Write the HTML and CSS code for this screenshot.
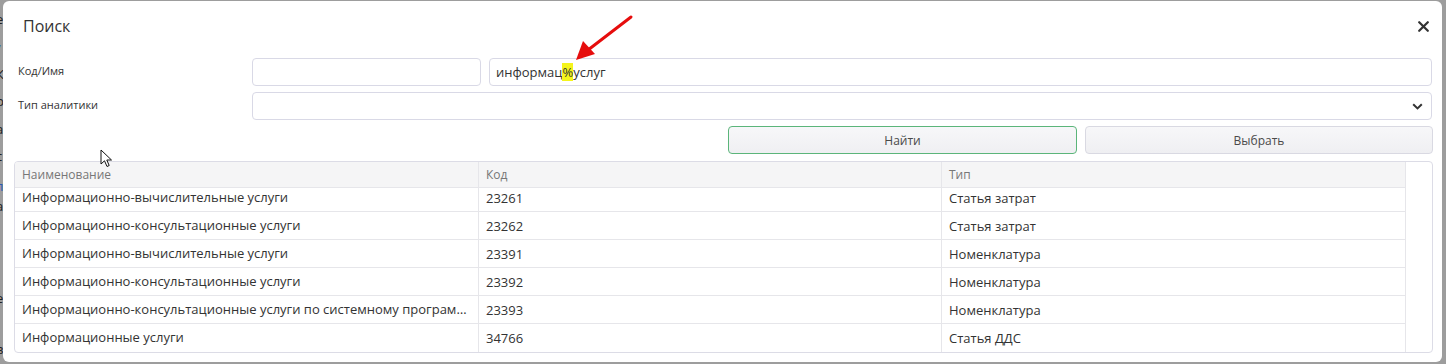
FILE: index.html
```html
<!DOCTYPE html>
<html lang="ru">

<head>
    <meta charset="UTF-8" />
    <meta name="viewport" content="width=device-width, initial-scale=1.0" />
    <title>Поиск</title>
    <link rel="stylesheet" href="styles.css">
</head>

<body>
    <div class="page-edge">
        <span class="edge-char e1">е</span>
        <span class="edge-char link e2">/</span>
        <span class="edge-char e3">К</span>
        <span class="edge-char e4">р</span>
        <span class="edge-char e5">а</span>
        <span class="edge-char e6">с</span>
        <span class="edge-char link e7">л</span>
        <span class="edge-char e8">а</span>
        <span class="edge-char e9">е</span>
        <span class="edge-char e10">в</span>
    </div>

    <div class="modal">
        <div class="modal-header">
            <h2 class="modal-title">Поиск</h2>
            <button class="close" title="Закрыть">
                <svg width="11" height="11" viewBox="0 0 11 11">
                    <path d="M1.2 1.2 L9.8 9.8 M9.8 1.2 L1.2 9.8" stroke="#333" stroke-width="2.2" stroke-linecap="round" />
                </svg>
            </button>
        </div>

        <div class="form">
            <label class="label">Код/Имя</label>
            <div class="field-pair">
                <div class="input code-input"></div>
                <div class="input name-input">информац<span class="hl">%</span>услуг</div>
            </div>

            <label class="label">Тип аналитики</label>
            <div class="input select">
                <svg width="11" height="7" viewBox="0 0 11 7">
                    <path d="M1.2 1.2 L5.5 5.4 L9.8 1.2" fill="none" stroke="#333" stroke-width="2" />
                </svg>
            </div>

            <div class="actions">
                <button class="btn btn-find">Найти</button>
                <button class="btn">Выбрать</button>
            </div>
        </div>

        <div class="table">
            <div class="table-main">
                <div class="row head">
                    <div class="cell">Наименование</div>
                    <div class="cell">Код</div>
                    <div class="cell">Тип</div>
                </div>
                <div class="tbody">
                    <div class="row first">
                        <div class="cell">Информационно-вычислительные услуги</div>
                        <div class="cell">23261</div>
                        <div class="cell">Статья затрат</div>
                    </div>
                    <div class="row">
                        <div class="cell">Информационно-консультационные услуги</div>
                        <div class="cell">23262</div>
                        <div class="cell">Статья затрат</div>
                    </div>
                    <div class="row">
                        <div class="cell">Информационно-вычислительные услуги</div>
                        <div class="cell">23391</div>
                        <div class="cell">Номенклатура</div>
                    </div>
                    <div class="row">
                        <div class="cell">Информационно-консультационные услуги</div>
                        <div class="cell">23392</div>
                        <div class="cell">Номенклатура</div>
                    </div>
                    <div class="row">
                        <div class="cell">Информационно-консультационные услуги по системному программному обеспечению</div>
                        <div class="cell">23393</div>
                        <div class="cell">Номенклатура</div>
                    </div>
                    <div class="row last">
                        <div class="cell">Информационные услуги</div>
                        <div class="cell">34766</div>
                        <div class="cell">Статья ДДС</div>
                    </div>
                </div>
            </div>
        </div>

        <!-- annotation arrow drawn over the screenshot -->
        <svg class="arrow" width="70" height="60" viewBox="0 0 70 60">
            <path d="M64 3 L21 36" stroke="#e60d0d" stroke-width="3" stroke-linecap="round" />
            <path d="M9 46 L16 27 L28 40 Z" fill="#e60d0d" />
        </svg>

        <svg class="cursor" width="14" height="20" viewBox="0 0 14 20">
            <path d="M1 1 L1 15 L4.5 11.8 L7 17.5 L9.2 16.5 L6.8 11 L11.5 11 Z" fill="#fff" stroke="#111" stroke-width="1" stroke-linejoin="round" />
        </svg>
    </div>
</body>

</html>
```

FILE: styles.css
```css
* {
    box-sizing: border-box;
}

body {
    margin: 0;
    height: 364px;
    overflow: hidden;
    background-color: #9d9d9d;
    font-family: "Open Sans", "Liberation Sans", sans-serif;
    color: #333;
    display: flex;
    align-items: flex-start;
}

.page-edge {
    width: 3px;
    height: 364px;
    overflow: hidden;
    display: flex;
    flex-direction: column;
    font-size: 13px;
    line-height: 14px;
    color: #222;
}

.edge-char {
    display: block;
    margin-left: -4px;
}

.edge-char.link {
    color: #2a5bb5;
}

.e1 { margin-top: 12px; }
.e2 { margin-top: 16px; }
.e3 { margin-top: 11px; }
.e4 { margin-top: 13px; }
.e5 { margin-top: 14px; }
.e6 { margin-top: 13px; }
.e7 { margin-top: 16px; }
.e8 { margin-top: 6px; }
.e9 { margin-top: 78px; }
.e10 { margin-top: 37px; }

.modal {
    position: relative;
    margin-top: 1px;
    width: 1439px;
    height: 361px;
    background-color: #fff;
    border-radius: 6px;
    display: flex;
    flex-direction: column;
}

.modal-header {
    display: flex;
    justify-content: space-between;
    align-items: center;
    height: 50px;
    padding: 0 8px 0 20px;
}

.modal-title {
    margin: 0;
    font-size: 16px;
    font-weight: 500;
    color: #333;
}

.close {
    border: none;
    background: none;
    padding: 0;
    width: 14px;
    height: 14px;
    display: flex;
    align-items: center;
    justify-content: center;
    margin-right: 4px;
}

.form {
    display: grid;
    grid-template-columns: 234px 1fr;
    row-gap: 6px;
    padding: 7px 10px 0 15px;
    align-items: center;
}

.label {
    font-size: 11px;
    font-weight: 500;
    color: #333;
    margin-top: -4px;
}

.field-pair {
    display: grid;
    grid-template-columns: 229px 1fr;
    gap: 8px;
}

.input {
    height: 28px;
    border: 1px solid #d9d9e6;
    border-radius: 4px;
    background-color: #fff;
    font-size: 13px;
    line-height: 26px;
    padding: 0 6px;
    color: #333;
}

.hl {
    background-color: #f4f41c;
    display: inline-block;
    line-height: 18px;
}

.select {
    display: flex;
    align-items: center;
    justify-content: flex-end;
    padding-right: 8px;
}

.actions {
    grid-column: 2;
    justify-self: end;
    display: grid;
    grid-template-columns: 349px 348px;
    gap: 8px;
    margin-right: -1px;
}

.btn {
    height: 28px;
    border: 1px solid #d9d9e2;
    border-radius: 4px;
    background: linear-gradient(#f7f7f9, #efeff2);
    font-family: "Open Sans", "Liberation Sans", sans-serif;
    font-size: 12px;
    color: #4a4a4a;
    cursor: pointer;
}

.btn-find {
    border-color: #5bb57a;
}

.table {
    flex: 1;
    margin: 7px 9px 9px 11px;
    border: 1px solid #dcdce6;
    border-radius: 4px;
    overflow: hidden;
    display: flex;
}

.table-main {
    width: 1391px;
    border-right: 1px solid #e6e6ea;
    display: flex;
    flex-direction: column;
}

.row {
    display: grid;
    grid-template-columns: 463px 463px 1fr;
    height: 28px;
    border-bottom: 1px solid #e6e6ea;
    font-size: 13px;
    color: #333;
}

.row.head {
    height: 26px;
    background-color: #f5f5f6;
    font-size: 12px;
    color: #777;
}

.row.first {
    margin-top: -4px;
}

.row.last {
    border-bottom: none;
}

.cell {
    padding: 0 7px;
    display: flex;
    align-items: center;
    border-left: 1px solid #e6e6ea;
    white-space: nowrap;
    overflow: hidden;
}

.cell:first-child {
    border-left: none;
    display: block;
    line-height: 27px;
    text-overflow: ellipsis;
}

.head .cell:first-child {
    line-height: 25px;
}

.tbody {
    flex: 1;
    overflow: hidden;
}

.arrow {
    position: absolute;
    left: 564px;
    top: 13px;
}

.cursor {
    position: absolute;
    left: 97px;
    top: 148px;
}
```
